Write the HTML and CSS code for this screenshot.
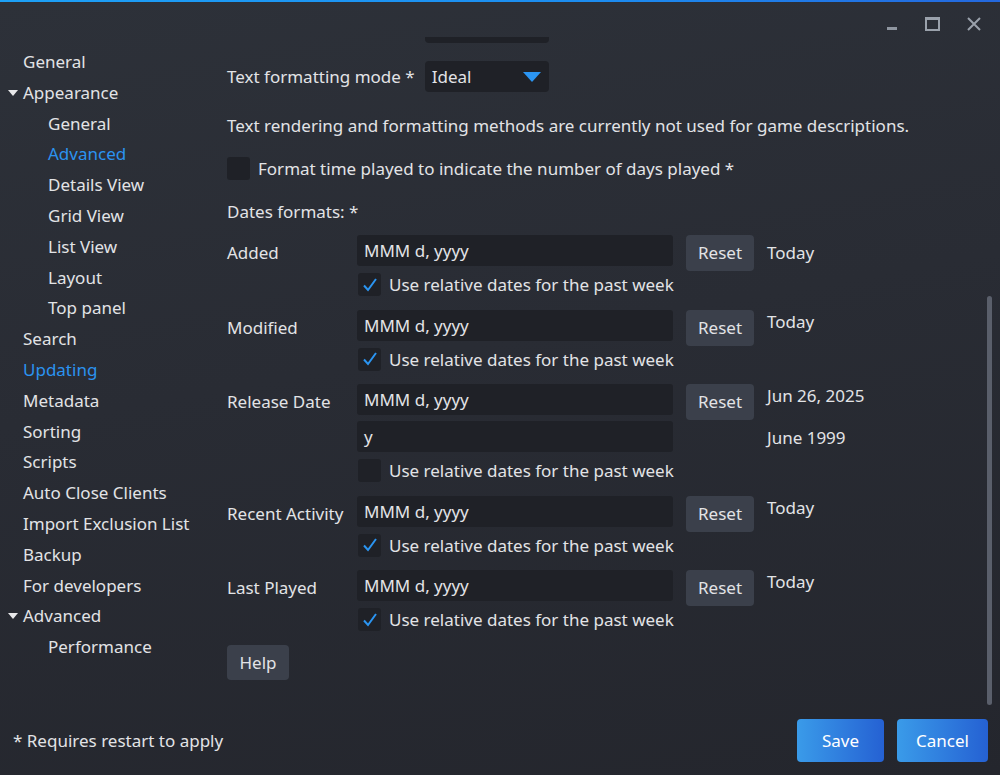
FILE: index.html
```html
<!DOCTYPE html>
<html>
<head>
<meta charset="utf-8">
<link rel="stylesheet" href="styles.css">
</head>
<body>
<div class="window">
  <div class="topline"></div>
  <div class="titlebar">
    <div class="tb-btn tb-min"><span></span></div>
    <div class="tb-btn tb-max"><span></span></div>
    <div class="tb-btn tb-close">
      <svg width="14" height="14" viewBox="0 0 14 14"><path d="M1 1 L13 13 M13 1 L1 13" stroke="#9aa1ab" stroke-width="2" fill="none"/></svg>
    </div>
  </div>
  <div class="main">
    <nav class="sidebar">
      <div class="nav-item">General</div>
      <div class="nav-item"><span class="tri"></span>Appearance</div>
      <div class="nav-item sub">General</div>
      <div class="nav-item sub active">Advanced</div>
      <div class="nav-item sub">Details View</div>
      <div class="nav-item sub">Grid View</div>
      <div class="nav-item sub">List View</div>
      <div class="nav-item sub">Layout</div>
      <div class="nav-item sub">Top panel</div>
      <div class="nav-item">Search</div>
      <div class="nav-item active">Updating</div>
      <div class="nav-item">Metadata</div>
      <div class="nav-item">Sorting</div>
      <div class="nav-item">Scripts</div>
      <div class="nav-item">Auto Close Clients</div>
      <div class="nav-item">Import Exclusion List</div>
      <div class="nav-item">Backup</div>
      <div class="nav-item">For developers</div>
      <div class="nav-item"><span class="tri"></span>Advanced</div>
      <div class="nav-item sub">Performance</div>
    </nav>
    <div class="content">
      <div class="scroll">
        <div class="mode-grid">
          <span class="lbl-inline hidden-lbl">Text rendering mode *</span>
          <div class="combo"><span class="hidden-lbl">Auto</span></div>
          <span class="lbl-inline">Text formatting mode *</span>
          <div class="combo"><span>Ideal</span><span class="caret"></span></div>
        </div>
        <div class="desc">Text rendering and formatting methods are currently not used for game descriptions.</div>
        <div class="check-row top-check">
          <span class="box"></span><span>Format time played to indicate the number of days played *</span>
        </div>
        <div class="dates-title">Dates formats: *</div>

        <div class="group">
          <div class="g-label">Added</div>
          <div class="fields">
            <div class="input">MMM d, yyyy</div>
            <div class="check-row"><span class="box checked"><svg width="16" height="16" viewBox="0 0 16 16"><path d="M2 8.5 L6 13 L14 2" stroke="#2b95f2" stroke-width="2" fill="none"/></svg></span><span>Use relative dates for the past week</span></div>
          </div>
          <div class="reset">Reset</div>
          <div class="vals first"><div>Today</div></div>
        </div>

        <div class="group">
          <div class="g-label">Modified</div>
          <div class="fields">
            <div class="input">MMM d, yyyy</div>
            <div class="check-row"><span class="box checked"><svg width="16" height="16" viewBox="0 0 16 16"><path d="M2 8.5 L6 13 L14 2" stroke="#2b95f2" stroke-width="2" fill="none"/></svg></span><span>Use relative dates for the past week</span></div>
          </div>
          <div class="reset">Reset</div>
          <div class="vals"><div>Today</div></div>
        </div>

        <div class="group">
          <div class="g-label">Release Date</div>
          <div class="fields">
            <div class="input tight">MMM d, yyyy</div>
            <div class="input">y</div>
            <div class="check-row"><span class="box"></span><span>Use relative dates for the past week</span></div>
          </div>
          <div class="reset">Reset</div>
          <div class="vals"><div>Jun 26, 2025</div><div class="v2">June 1999</div></div>
        </div>

        <div class="group">
          <div class="g-label">Recent Activity</div>
          <div class="fields">
            <div class="input">MMM d, yyyy</div>
            <div class="check-row"><span class="box checked"><svg width="16" height="16" viewBox="0 0 16 16"><path d="M2 8.5 L6 13 L14 2" stroke="#2b95f2" stroke-width="2" fill="none"/></svg></span><span>Use relative dates for the past week</span></div>
          </div>
          <div class="reset">Reset</div>
          <div class="vals"><div>Today</div></div>
        </div>

        <div class="group">
          <div class="g-label">Last Played</div>
          <div class="fields">
            <div class="input">MMM d, yyyy</div>
            <div class="check-row"><span class="box checked"><svg width="16" height="16" viewBox="0 0 16 16"><path d="M2 8.5 L6 13 L14 2" stroke="#2b95f2" stroke-width="2" fill="none"/></svg></span><span>Use relative dates for the past week</span></div>
          </div>
          <div class="reset">Reset</div>
          <div class="vals"><div>Today</div></div>
        </div>

        <div class="help">Help</div>
      </div>
      <div class="scrollbar"></div>
    </div>
  </div>
  <div class="footer">
    <div class="note">* Requires restart to apply</div>
    <div class="actions">
      <div class="btn-primary save">Save</div>
      <div class="btn-primary cancel">Cancel</div>
    </div>
  </div>
</div>
</body>
</html>
```

FILE: styles.css
```css
* { box-sizing: border-box; }
html, body { margin: 0; padding: 0; }
body {
  width: 1000px;
  height: 775px;
  overflow: hidden;
  font-family: "Noto Sans", "Open Sans", sans-serif;
  font-size: 17px;
  color: #e2e3e6;
  background: linear-gradient(170deg, #2d3139 0%, #292c34 45%, #24262d 100%);
}
.window {
  width: 1000px;
  height: 775px;
  display: flex;
  flex-direction: column;
}
.topline {
  height: 2px;
  background: linear-gradient(90deg, #1da1f7, #1c8cf0 60%, #2468de);
}
.titlebar {
  height: 35px;
  display: flex;
  justify-content: flex-end;
  align-items: flex-start;
  padding-right: 11px;
}
.tb-btn {
  width: 30px;
  height: 24px;
  margin-top: 10px;
  margin-left: 12px;
  display: flex;
  align-items: center;
  justify-content: center;
}
.tb-min span {
  display: block;
  width: 10px;
  height: 3px;
  background: #8f96a0;
  margin-top: 9px;
  margin-left: 4px;
}
.tb-max span {
  display: block;
  width: 15px;
  height: 14px;
  border: 2px solid #9aa1ab;
  border-top-width: 3px;
}
.main {
  flex: 1;
  display: flex;
  min-height: 0;
}
.sidebar {
  width: 210px;
  padding-top: 10px;
}
.nav-item {
  height: 30.8px;
  line-height: 30px;
  padding-left: 23px;
  position: relative;
  white-space: nowrap;
}
.nav-item.sub { padding-left: 48px; }
.nav-item.active { color: #2b93f0; }
.tri {
  position: absolute;
  left: 8px;
  top: 12px;
  width: 0;
  height: 0;
  border-left: 5px solid transparent;
  border-right: 5px solid transparent;
  border-top: 6px solid #e8e8ea;
}
.content {
  flex: 1;
  display: flex;
  min-width: 0;
  height: 668px;
}
.scroll {
  flex: 1;
  overflow: hidden;
  padding-left: 17px;
}
.mode-grid {
  display: grid;
  grid-template-columns: max-content 124px;
  grid-auto-rows: 31px;
  column-gap: 10px;
  row-gap: 18px;
  align-items: center;
  margin-top: -25px;
}
.lbl-inline { white-space: nowrap; }
.hidden-lbl { visibility: hidden; }
.combo {
  width: 124px;
  height: 31px;
  background: #1f2127;
  border-radius: 4px;
  display: flex;
  align-items: center;
  justify-content: space-between;
  padding: 0 8px 0 7px;
}
.caret {
  width: 0;
  height: 0;
  border-left: 9.5px solid transparent;
  border-right: 9.5px solid transparent;
  border-top: 10px solid #2b95f2;
}
.desc {
  margin-top: 23px;
  line-height: 22px;
}
.check-row {
  display: flex;
  align-items: center;
  height: 23px;
  white-space: nowrap;
}
.top-check { margin-top: 20px; }
.box {
  width: 23px;
  height: 23px;
  border-radius: 3px;
  background: #1f2127;
  margin-right: 8px;
  flex: none;
  display: flex;
  align-items: center;
  justify-content: center;
}
.dates-title {
  margin-top: 21px;
  line-height: 22px;
}
.group {
  display: flex;
  align-items: flex-start;
  margin-top: 12px;
}
.group + .group { margin-top: 13.5px; }
.g-label {
  width: 130px;
  line-height: 36px;
  white-space: nowrap;
}
.fields {
  width: 316px;
}
.input {
  height: 31px;
  line-height: 31px;
  background: #1f2127;
  border-radius: 3px;
  padding-left: 7px;
  margin-bottom: 7px;
}
.input.tight { margin-bottom: 6px; }
.fields .check-row { margin-left: 1px; }
.reset {
  width: 68px;
  height: 36px;
  line-height: 36px;
  text-align: center;
  background: #3b404b;
  border-radius: 4px;
  margin-left: 13px;
}
.vals {
  margin-left: 13px;
  padding-top: 1px;
  line-height: 22px;
  white-space: nowrap;
}
.vals.first { padding-top: 7px; }
.vals .v2 { margin-top: 20px; }
.help {
  width: 62px;
  height: 35px;
  margin-top: 14px;
  line-height: 35px;
  text-align: center;
  background: #3b404b;
  border-radius: 4px;
}
.scrollbar {
  width: 5px;
  height: 409px;
  margin-top: 259px;
  margin-right: 8px;
  background: #5a5f6b;
  border-radius: 3px;
}
.footer {
  height: 70px;
  display: flex;
  align-items: flex-start;
  justify-content: space-between;
  padding: 14px 12px 0 13px;
}
.note {
  margin-top: 11px;
  line-height: 22px;
}
.actions {
  display: flex;
  gap: 13px;
}
.btn-primary {
  height: 43px;
  line-height: 43px;
  text-align: center;
  color: #ffffff;
  border-radius: 4px;
  background: linear-gradient(90deg, #3a9be9, #2561d3);
}
.save { width: 87px; }
.cancel { width: 91px; }
```
